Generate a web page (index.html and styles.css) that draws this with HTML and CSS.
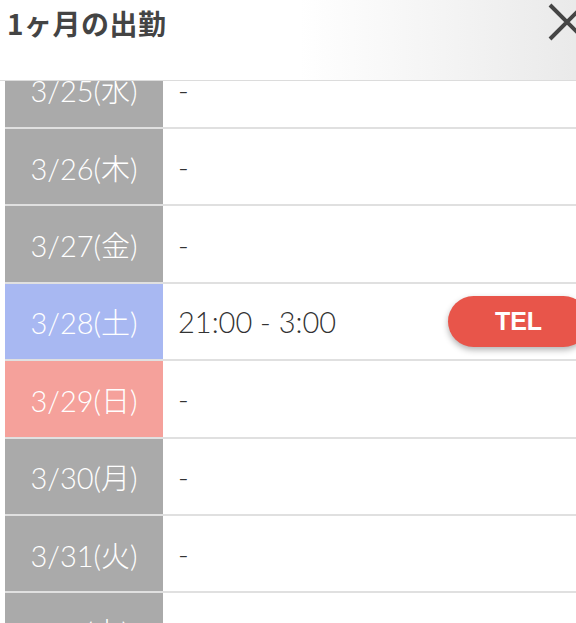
FILE: index.html
```html
<!DOCTYPE html>
<html lang="ja">
<head>
  <meta charset="UTF-8" />
  <meta name="viewport" content="width=device-width, initial-scale=1.0"/>
  <title>1ヶ月の出勤</title>
  <link rel="stylesheet" href="styles.css">
</head>
<body>
  <div class="page">
    <header class="modal-head">
      <h1>1ヶ月の出勤</h1>
      <button class="close" aria-label="閉じる">
        <svg width="40" height="40" viewBox="0 0 40 40">
          <path d="M3 3 L37 37 M37 3 L3 37" stroke="#454545" stroke-width="4" fill="none"/>
        </svg>
      </button>
    </header>

    <div class="scroll">
      <ul class="days">
        <li class="day"><span class="date">3/25(水)</span><span class="shift">-</span></li>
        <li class="day"><span class="date">3/26(木)</span><span class="shift">-</span></li>
        <li class="day"><span class="date">3/27(金)</span><span class="shift">-</span></li>
        <li class="day sat">
          <span class="date">3/28(土)</span>
          <span class="shift">21:00 - 3:00 <a class="tel" href="#">TEL</a></span>
        </li>
        <li class="day sun"><span class="date">3/29(日)</span><span class="shift">-</span></li>
        <li class="day"><span class="date">3/30(月)</span><span class="shift">-</span></li>
        <li class="day"><span class="date">3/31(火)</span><span class="shift">-</span></li>
        <li class="day"><span class="date">4/1(水)</span><span class="shift">-</span></li>
      </ul>
    </div>
  </div>
</body>
</html>
```

FILE: styles.css
```css
html, body { margin: 0; padding: 0; overflow: hidden; background: #fff; }
body { font-family: "Lato", "Liberation Sans", "Noto Sans CJK JP", sans-serif; }
.page { width: 600px; height: 623px; display: flex; flex-direction: column; }

.modal-head { height: 80px; flex: none; display: flex; justify-content: space-between; align-items: flex-start; border-bottom: 1px solid #dcdcdc; background: linear-gradient(90deg, #fff 0%, #fff 50%, #e8e8e8 100%); position: relative; z-index: 1; }
.modal-head h1 { margin: 3px 0 0 7px; font-family: "Noto Sans CJK JP", sans-serif; font-size: 28px; font-weight: 700; color: #444; letter-spacing: 0.5px; }
.close { margin: 2px 13px 0 0; padding: 0; border: 0; background: none; width: 40px; height: 40px; }

.scroll { flex: 1; overflow: hidden; }
.days { list-style: none; margin: -29.4px 0 0 5px; padding: 0; }
.day { display: grid; grid-template-columns: 158px 1fr; height: 75.4px; border-bottom: 2px solid #e0e0e0; }
.date { background: #aaa; color: #fff; font-size: 29px; font-weight: 300; display: flex; align-items: center; justify-content: center; }
.sat .date { background: #a8b8f2; }
.sun .date { background: #f5a19b; }
.shift { display: flex; align-items: center; justify-content: space-between; padding: 0 11px 0 15px; font-size: 29px; font-weight: 300; color: #333; }
.tel { width: 141px; height: 51px; border-radius: 26px; background: #e8554a; color: #fff; font-family: "Liberation Sans", sans-serif; font-size: 25px; font-weight: 700; text-decoration: none; display: flex; align-items: center; justify-content: center; box-shadow: 0 3px 6px rgba(0,0,0,0.3); }
```
